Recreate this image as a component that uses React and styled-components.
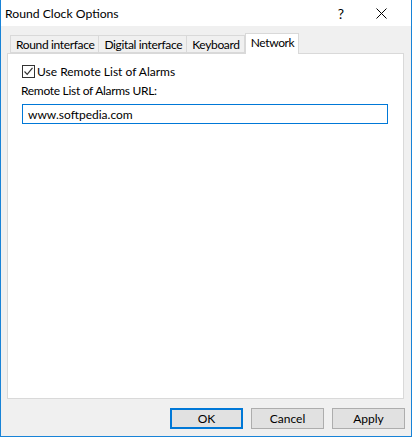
import styled, { createGlobalStyle } from 'styled-components';

const GlobalStyle = createGlobalStyle`
  html, body {
    margin: 0;
    padding: 0;
    background: #ffffff;
  }
  * {
    box-sizing: border-box;
  }
`;

const Window = styled.div`
  width: 412px;
  height: 437px;
  display: flex;
  flex-direction: column;
  border: 1px solid #1883d7;
  border-top: none;
  background: #f0f0f0;
  font-family: Lato, 'Noto Sans', sans-serif;
  font-size: 12px;
  color: #000;
`;

const TitleBar = styled.div`
  height: 26px;
  background: #fff;
  display: flex;
  align-items: center;
  padding-left: 4px;
`;

const Title = styled.div`
  flex: 1;
  font-size: 12.2px;
`;

const TitleButton = styled.div`
  width: 40px;
  height: 26px;
  display: flex;
  align-items: center;
  justify-content: center;
  font-size: 14px;
  margin-right: ${(p) => p.$gap || 0}px;
`;

const Body = styled.div`
  flex: 1;
  display: flex;
  flex-direction: column;
  padding: 7px 7px 0 6px;
`;

const TabStrip = styled.div`
  display: flex;
  align-items: flex-end;
  height: 20px;
  padding-left: 3px;
  position: relative;
  z-index: 1;
`;

const Tab = styled.div`
  height: ${(p) => (p.$active ? 21 : 18)}px;
  margin-bottom: ${(p) => (p.$active ? -1 : 0)}px;
  padding: ${(p) => (p.$active ? '0 4px 3px 5px' : '1px 4px 0 5px')};
  display: flex;
  align-items: center;
  letter-spacing: -0.35px;
  background: ${(p) => (p.$active ? '#fff' : '#f0f0f0')};
  border: 1px solid #d9d9d9;
  border-bottom: ${(p) => (p.$active ? 'none' : '1px solid #d9d9d9')};
  border-left: ${(p) => (p.$first || p.$active ? '1px solid #d9d9d9' : 'none')};
  white-space: nowrap;
`;

const Pane = styled.div`
  height: 346px;
  background: #fff;
  border: 1px solid #d9d9d9;
  padding: 10px 15px 0 13px;
  display: flex;
  flex-direction: column;
`;

const CheckRow = styled.label`
  display: flex;
  align-items: center;
  gap: 2px;
  margin-left: 1px;
  height: 14px;
`;

const Box = styled.span`
  width: 13px;
  height: 13px;
  border: 1px solid #333;
  background: #fff;
  display: flex;
  align-items: center;
  justify-content: center;
`;

const FieldLabel = styled.div`
  margin-top: 5px;
  height: 16px;
  line-height: 16px;
  letter-spacing: -0.3px;
`;

const UrlInput = styled.div`
  margin-top: 5px;
  margin-left: 1px;
  height: 20px;
  border: 1px solid #0078d7;
  padding-left: 5px;
  display: flex;
  align-items: center;
`;

const ButtonRow = styled.div`
  display: flex;
  justify-content: flex-end;
  gap: 8px;
  padding: 9px 0 0;
  margin-right: -1px;
`;

const Button = styled.div`
  width: 73px;
  height: 21px;
  display: flex;
  align-items: center;
  justify-content: center;
  background: #e1e1e1;
  border: ${(p) => (p.$default ? '2px solid #0078d7' : '1px solid #adadad')};
`;

const tabs = ['Round interface', 'Digital interface', 'Keyboard', 'Network'];

export default function App() {
  return (
    <>
      <GlobalStyle />
      <Window>
        <TitleBar>
          <Title>Round Clock Options</Title>
          <TitleButton>?</TitleButton>
          <TitleButton $gap={10}>
            <svg width="11" height="11" viewBox="0 0 11 11">
              <path d="M0.5 0.5 L10.5 10.5 M10.5 0.5 L0.5 10.5" stroke="#000" strokeWidth="1" />
            </svg>
          </TitleButton>
        </TitleBar>
        <Body>
          <TabStrip>
            {tabs.map((t, i) => (
              <Tab key={t} $first={i === 0} $active={i === 3}>
                {t}
              </Tab>
            ))}
          </TabStrip>
          <Pane>
            <CheckRow>
              <Box>
                <svg width="11" height="11" viewBox="0 0 11 11">
                  <path d="M1.5 5.5 L4.2 8.3 L9.5 1.8" stroke="#333" strokeWidth="1.2" fill="none" />
                </svg>
              </Box>
              Use Remote List of Alarms
            </CheckRow>
            <FieldLabel>Remote List of Alarms URL:</FieldLabel>
            <UrlInput>www.softpedia.com</UrlInput>
          </Pane>
          <ButtonRow>
            <Button $default>OK</Button>
            <Button>Cancel</Button>
            <Button>Apply</Button>
          </ButtonRow>
        </Body>
      </Window>
    </>
  );
}
